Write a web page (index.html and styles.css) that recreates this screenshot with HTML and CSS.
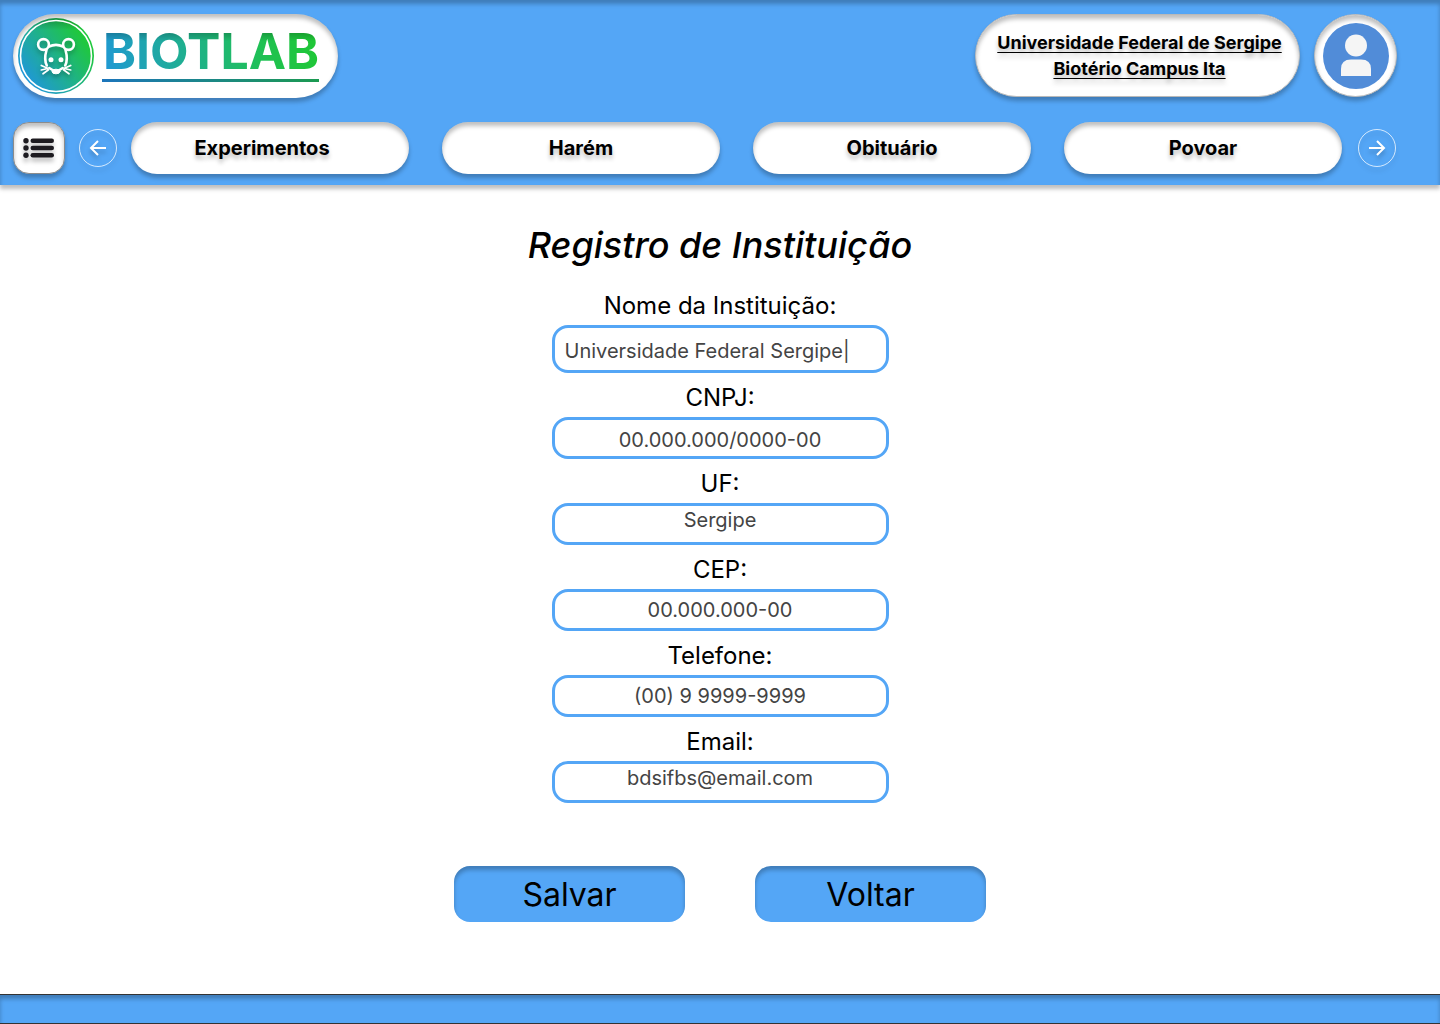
FILE: index.html
```html
<!DOCTYPE html>
<html lang="pt-BR">
<head>
  <meta charset="utf-8">
  <meta name="viewport" content="width=device-width, initial-scale=1">
  <title>Biotlab - Registro de Instituição</title>
  <link rel="stylesheet" href="styles.css">
</head>
<body>
  <header class="header">
    <div class="header-top">
      <a class="logo" href="#">
        <svg class="logo-mark" viewBox="0 0 76 76" aria-hidden="true">
          <defs>
            <linearGradient id="mark" x1="0.1" y1="0.8" x2="0.85" y2="0.25">
              <stop offset="0" stop-color="#1f97d8"/>
              <stop offset="0.5" stop-color="#1fb08d"/>
              <stop offset="1" stop-color="#1fc83c"/>
            </linearGradient>
            <linearGradient id="shade" x1="0" y1="0" x2="0" y2="1">
              <stop offset="0" stop-color="#000" stop-opacity="0.25"/>
              <stop offset="0.16" stop-color="#000" stop-opacity="0"/>
            </linearGradient>
          </defs>
          <circle cx="38" cy="38" r="38" fill="url(#mark)"/>
          <circle cx="38" cy="38" r="38" fill="url(#shade)"/>
          <circle cx="38" cy="38" r="35.5" fill="none" stroke="#fff" stroke-width="1.6"/>
          <g class="mouse" fill="none" stroke="#fff" stroke-width="2.6" stroke-linecap="round" stroke-linejoin="round">
            <circle cx="25.500" cy="26.500" r="5.400"/>
            <circle cx="50.500" cy="26.500" r="5.400"/>
            <path d="M31 28.500C35 26.600 41 26.600 45 28.500M28.500 32C26.800 38 27 44 28.800 47.500M47.500 32C49.200 38 49 44 47.200 47.500"/>
            <path d="M23.300 47.500l6.400 2.700M23.300 52l6.400-1.500M25 55.800l5.500-4M52.700 47.500l-6.400 2.700M52.700 52l-6.400-1.500M51 55.800l-5.500-4" stroke-width="1.7"/>
            <path d="M31.300 50l4 2.500M44.700 50l-4 2.500"/>
            <ellipse cx="38" cy="53.500" rx="4" ry="2.300" fill="#fff" stroke-width="1"/>
            <circle cx="33" cy="41.700" r="2.500" fill="#fff" stroke="none"/>
            <circle cx="43" cy="41.700" r="2.500" fill="#fff" stroke="none"/>
          </g>
        </svg>
        <span class="logo-name">BIOTLAB</span>
      </a>
      <div class="account">
        <a class="institution" href="#">Universidade Federal de Sergipe<br>Biotério Campus Ita</a>
        <button class="avatar" type="button" aria-label="Perfil">
          <svg viewBox="0 0 66 66" aria-hidden="true">
            <circle cx="33" cy="33" r="33" fill="#518cd8"/>
            <circle cx="33" cy="22.500" r="11" fill="#f5f5f5"/>
            <path d="M18 53V46Q18 36.500 28 36.500H38Q48 36.500 48 46V53Z" fill="#f5f5f5"/>
          </svg>
        </button>
      </div>
    </div>
    <nav class="nav" aria-label="Principal">
      <button class="menu" type="button" aria-label="Menu">
        <svg viewBox="0 0 32 20" aria-hidden="true" fill="#1d1b20">
          <circle cx="3" cy="2.700" r="2.700"/><circle cx="3" cy="10" r="2.700"/><circle cx="3" cy="17.300" r="2.700"/>
          <rect x="7.500" y="0.500" width="23.500" height="4.400" rx="2.200"/>
          <rect x="7.500" y="7.800" width="23.500" height="4.400" rx="2.200"/>
          <rect x="7.500" y="15.100" width="23.500" height="4.400" rx="2.200"/>
        </svg>
      </button>
      <button class="arrow" type="button" aria-label="Anterior">
        <svg viewBox="0 0 38 38" aria-hidden="true"><circle cx="19" cy="19" r="18.500"/><path d="M27 19H12M19 12l-7 7 7 7"/></svg>
      </button>
      <div class="tabs">
        <a class="tab tab-wide" href="#">Experimentos</a>
        <a class="tab" href="#">Harém</a>
        <a class="tab" href="#">Obituário</a>
        <a class="tab" href="#">Povoar</a>
      </div>
      <button class="arrow" type="button" aria-label="Próximo">
        <svg viewBox="0 0 38 38" aria-hidden="true"><circle cx="19" cy="19" r="18.500"/><path d="M11 19H26M19 12l7 7-7 7"/></svg>
      </button>
    </nav>
  </header>

  <main class="main">
    <h1 class="title">Registro de Instituição</h1>
    <form class="form">
      <div class="field">
        <label for="nome">Nome da Instituição:</label>
        <input class="input-name" id="nome" type="text" value="Universidade Federal Sergipe|">
      </div>
      <div class="field">
        <label for="cnpj">CNPJ:</label>
        <input class="input-low" id="cnpj" type="text" value="00.000.000/0000-00">
      </div>
      <div class="field">
        <label for="uf">UF:</label>
        <input class="input-high" id="uf" type="text" value="Sergipe">
      </div>
      <div class="field">
        <label for="cep">CEP:</label>
        <input id="cep" type="text" value="00.000.000-00">
      </div>
      <div class="field">
        <label for="telefone">Telefone:</label>
        <input id="telefone" type="tel" value="(00) 9 9999-9999">
      </div>
      <div class="field">
        <label for="email">Email:</label>
        <input class="input-high" id="email" type="email" value="bdsifbs@email.com">
      </div>
      <div class="actions">
        <button class="action" type="submit">Salvar</button>
        <button class="action" type="button">Voltar</button>
      </div>
    </form>
  </main>

  <footer class="footer"></footer>
</body>
</html>
```

FILE: styles.css
```css
:root {
  --blue: #54a6f6;
  --inner: inset 0 4px 4px rgba(0, 0, 0, 0.25);
  --drop: 0 4px 4px rgba(0, 0, 0, 0.25);
}

* {
  box-sizing: border-box;
}

body {
  margin: 0;
  min-height: 100vh;
  display: flex;
  flex-direction: column;
  background: #fff;
  color: #000;
  font-family: Inter, "Liberation Sans", sans-serif;
}

button,
input {
  font: inherit;
  color: inherit;
}

button {
  padding: 0;
  border: 0;
  cursor: pointer;
}

.header {
  padding: 14px 43px 11px 13px;
  background: var(--blue);
  box-shadow: var(--inner), var(--drop);
}

.header-top {
  display: flex;
  justify-content: space-between;
  margin-bottom: 24px;
}

.logo {
  display: flex;
  align-items: center;
  gap: 8px;
  width: 325px;
  height: 84px;
  padding-left: 5px;
  border-radius: 42px;
  background: #fff;
  box-shadow: var(--inner), var(--drop);
  text-decoration: none;
}

.logo-mark {
  width: 76px;
  height: 76px;
}

.mouse {
  filter: drop-shadow(0 3px 2px rgba(0, 0, 0, 0.25));
}

.logo-name {
  margin-bottom: 8px;
  padding-left: 1px;
  border-bottom: 3px solid;
  border-image: linear-gradient(90deg, #1c75bc, #1b9a50) 1;
  background:
    linear-gradient(rgba(0, 0, 0, 0.2) 10px, transparent 18px),
    linear-gradient(75deg, #1f97d8, #1fb08d 40%, #1fc24f 75%, #1fc832);
  background-clip: text;
  -webkit-background-clip: text;
  color: transparent;
  font-size: 50px;
  font-weight: 700;
  line-height: 56px;
}

.account {
  display: flex;
  gap: 14px;
}

.institution {
  display: flex;
  align-items: center;
  justify-content: center;
  width: 325px;
  height: 83px;
  padding-left: 4px;
  border: 1px solid #b9b9b9;
  border-radius: 42px;
  background: #fff;
  box-shadow: var(--inner), var(--drop);
  color: #000;
  font-size: 18px;
  font-weight: 700;
  line-height: 26px;
  text-align: center;
  text-decoration: underline 1px;
  text-decoration-skip-ink: none;
  text-underline-offset: 3px;
  text-shadow: var(--drop);
}

.avatar {
  display: grid;
  place-items: center;
  width: 83px;
  height: 83px;
  border: 1px solid #b9b9b9;
  border-radius: 50%;
  background: #fff;
  box-shadow: var(--inner), var(--drop);
}

.avatar svg {
  width: 66px;
  height: 66px;
}

.nav {
  display: flex;
  align-items: center;
  gap: 14px;
  padding-right: 1px;
}

.menu {
  display: grid;
  place-items: center;
  width: 52px;
  height: 52px;
  border: 1px solid #8c8c8c;
  border-radius: 16px;
  background: #fff;
  box-shadow: var(--inner), var(--drop);
}

.menu svg {
  width: 32px;
  height: 20px;
  overflow: visible;
  filter: drop-shadow(0 4px 2px rgba(0, 0, 0, 0.25));
}

.arrow {
  width: 38px;
  height: 38px;
  background: none;
}

.arrow svg {
  display: block;
  overflow: visible;
  fill: none;
  stroke: #fff;
  stroke-width: 2;
  filter: drop-shadow(0 4px 2px rgba(0, 0, 0, 0.2));
}

.arrow circle {
  stroke-width: 1;
  stroke-opacity: 0.75;
}

.tabs {
  flex: 1;
  display: grid;
  grid-template-columns: repeat(4, 1fr);
  gap: 33px;
  margin-right: 2px;
}

.tab {
  height: 52px;
  border-radius: 26px;
  background: #fff;
  box-shadow: var(--inner), var(--drop);
  color: #000;
  font-size: 20px;
  font-weight: 700;
  line-height: 52px;
  text-align: center;
  text-decoration: none;
  text-shadow: var(--drop);
}

.tab-wide {
  padding-right: 16px;
}

.main {
  flex: 1;
  display: flex;
  flex-direction: column;
  align-items: center;
  padding: 36px 16px 72px;
}

.title {
  margin: 0 0 22px;
  font-size: 36px;
  font-style: italic;
  font-weight: 500;
  line-height: 48px;
}

.form {
  display: flex;
  flex-direction: column;
  align-items: center;
  gap: 10px;
}

.field {
  display: flex;
  flex-direction: column;
  gap: 4px;
  width: 337px;
}

.field label {
  font-size: 24px;
  line-height: 30px;
  text-align: center;
}

.field input {
  width: 100%;
  height: 42px;
  padding: 0 10px;
  border: 3px solid var(--blue);
  border-radius: 16px;
  background: #fff;
  color: #444;
  font-size: 20px;
  text-align: center;
}

.field .input-name {
  height: 48px;
  padding-top: 4px;
  text-align: left;
}

.field .input-low {
  padding-top: 4px;
}

.field .input-high {
  padding-bottom: 8px;
}

.actions {
  display: flex;
  gap: 70px;
  margin-top: 53px;
}

.action {
  width: 231px;
  height: 56px;
  border-radius: 16px;
  background: var(--blue);
  box-shadow: var(--inner);
  font-size: 32px;
}

.footer {
  height: 30px;
  border: 1px solid #333;
  border-width: 1px 0;
  background: var(--blue);
  box-shadow: var(--inner);
}
```
